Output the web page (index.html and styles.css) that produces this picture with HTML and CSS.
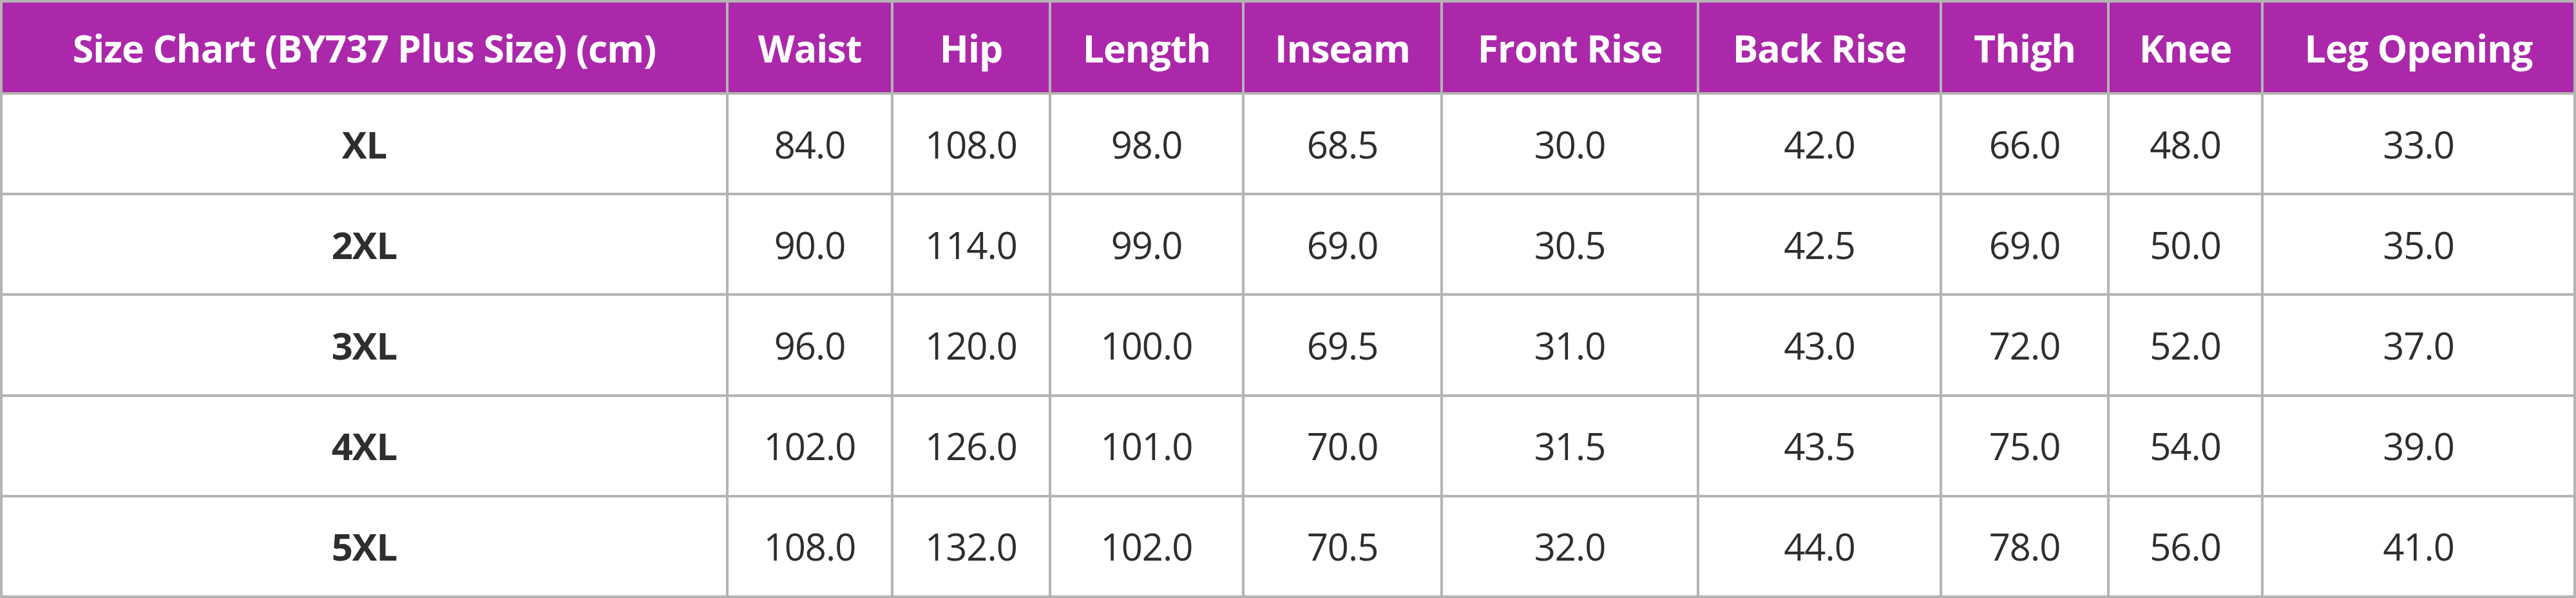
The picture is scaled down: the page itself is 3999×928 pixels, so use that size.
FILE: index.html
```html
<!DOCTYPE html>
<html lang="en">
<head>
<meta charset="utf-8">
<title>Size Chart (BY737 Plus Size)</title>
<link rel="stylesheet" href="styles.css">
</head>
<body>
<div class="chart" role="table">
  <div class="cell head">Size Chart (BY737 Plus Size) (cm)</div>
  <div class="cell head">Waist</div>
  <div class="cell head">Hip</div>
  <div class="cell head">Length</div>
  <div class="cell head">Inseam</div>
  <div class="cell head">Front Rise</div>
  <div class="cell head">Back Rise</div>
  <div class="cell head">Thigh</div>
  <div class="cell head">Knee</div>
  <div class="cell head">Leg Opening</div>

  <div class="cell size">XL</div>
  <div class="cell">84.0</div><div class="cell">108.0</div><div class="cell">98.0</div><div class="cell">68.5</div><div class="cell">30.0</div><div class="cell">42.0</div><div class="cell">66.0</div><div class="cell">48.0</div><div class="cell">33.0</div>

  <div class="cell size">2XL</div>
  <div class="cell">90.0</div><div class="cell">114.0</div><div class="cell">99.0</div><div class="cell">69.0</div><div class="cell">30.5</div><div class="cell">42.5</div><div class="cell">69.0</div><div class="cell">50.0</div><div class="cell">35.0</div>

  <div class="cell size">3XL</div>
  <div class="cell">96.0</div><div class="cell">120.0</div><div class="cell">100.0</div><div class="cell">69.5</div><div class="cell">31.0</div><div class="cell">43.0</div><div class="cell">72.0</div><div class="cell">52.0</div><div class="cell">37.0</div>

  <div class="cell size">4XL</div>
  <div class="cell">102.0</div><div class="cell">126.0</div><div class="cell">101.0</div><div class="cell">70.0</div><div class="cell">31.5</div><div class="cell">43.5</div><div class="cell">75.0</div><div class="cell">54.0</div><div class="cell">39.0</div>

  <div class="cell size">5XL</div>
  <div class="cell">108.0</div><div class="cell">132.0</div><div class="cell">102.0</div><div class="cell">70.5</div><div class="cell">32.0</div><div class="cell">44.0</div><div class="cell">78.0</div><div class="cell">56.0</div><div class="cell">41.0</div>
</div>
</body>
</html>
```

FILE: styles.css
```css
html, body {
  margin: 0;
  padding: 0;
  background: #ffffff;
}

.chart {
  box-sizing: border-box;
  width: 3999px;
  height: 928px;
  display: grid;
  grid-template-columns: 1123px 252px 241px 296px 304px 394px 373px 256px 235px 481px;
  grid-template-rows: 139px repeat(5, 1fr);
  gap: 4px;
  padding: 4px;
  background: #b4b4b4;
  font-family: "Open Sans", "Noto Sans", "Liberation Sans", sans-serif;
}

.cell {
  display: flex;
  align-items: center;
  justify-content: center;
  background: #ffffff;
  color: #2e2e2e;
  font-size: 58px;
  letter-spacing: -1px;
  white-space: nowrap;
}

.head {
  background: #ab28aa;
  color: #ffffff;
  font-weight: 700;
  font-size: 59px;
  letter-spacing: -1px;
}

.size {
  font-weight: 700;
}
```
